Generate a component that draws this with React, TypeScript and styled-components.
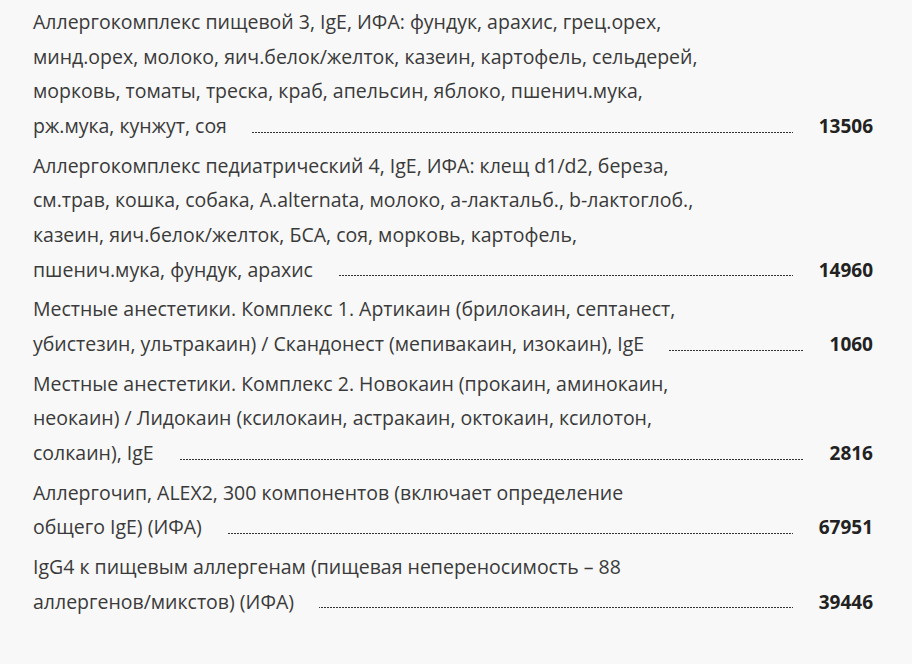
import styled, { createGlobalStyle } from 'styled-components';

type PriceItem = {
	name: string;
	price: string;
};

// line breaks kept as on the original page
const items: PriceItem[] = [
	{
		name: 'Аллергокомплекс пищевой 3, IgE, ИФА: фундук, арахис, грец.орех,\nминд.орех, молоко, яич.белок/желток, казеин, картофель, сельдерей,\nморковь, томаты, треска, краб, апельсин, яблоко, пшенич.мука,\nрж.мука, кунжут, соя',
		price: '13506',
	},
	{
		name: 'Аллергокомплекс педиатрический 4, IgE, ИФА: клещ d1/d2, береза,\nсм.трав, кошка, собака, A.alternata, молоко, a-лактальб., b-лактоглоб.,\nказеин, яич.белок/желток, БСА, соя, морковь, картофель,\nпшенич.мука, фундук, арахис',
		price: '14960',
	},
	{
		name: 'Местные анестетики. Комплекс 1. Артикаин (брилокаин, септанест,\nубистезин, ультракаин) / Скандонест (мепивакаин, изокаин), IgE',
		price: '1060',
	},
	{
		name: 'Местные анестетики. Комплекс 2. Новокаин (прокаин, аминокаин,\nнеокаин) / Лидокаин (ксилокаин, астракаин, октокаин, ксилотон,\nсолкаин), IgE',
		price: '2816',
	},
	{
		name: 'Аллергочип, ALEX2, 300 компонентов (включает определение\nобщего IgE) (ИФА)',
		price: '67951',
	},
	{
		name: 'IgG4 к пищевым аллергенам (пищевая непереносимость – 88\nаллергенов/микстов) (ИФА)',
		price: '39446',
	},
];

export default function App(): JSX.Element {
	return (
		<>
			<GlobalStyle />
			<PriceList>
				{items.map((item, index) => (
					<Row key={index}>
						<Name>
							<NameText>{item.name}</NameText>
						</Name>
						<Price>{item.price}</Price>
					</Row>
				))}
			</PriceList>
		</>
	);
}

const BG = '#f8f8f8';

const GlobalStyle = createGlobalStyle`
	html, body {
		margin: 0;
		padding: 0;
		background: ${BG};
	}

	body {
		font-family: 'Open Sans', 'Noto Sans', sans-serif;
		color: #3a3a3a;
	}
`;

const PriceList = styled.div`
	display: flex;
	flex-direction: column;
	gap: 5px;
	padding: 5px 39px 20px 33px;
`;

const Row = styled.div`
	display: flex;
	align-items: flex-end;
	line-height: 34.67px;
`;

// dotted leader drawn as a background, the text span hides it where text is
const Name = styled.div`
	flex: 1;
	padding-right: 90px;
	font-size: 19.5px;
	white-space: pre-line;
	background-image: linear-gradient(to right, #333 66%, transparent 66%);
	background-size: 3px 1px;
	background-repeat: repeat-x;
	background-position: left bottom 11px;
`;

const NameText = styled.span`
	background: ${BG};
	padding-right: 25px;
`;

const Price = styled.div`
	padding-left: 26px;
	font-size: 19px;
	font-weight: 700;
	color: #222;
`;
